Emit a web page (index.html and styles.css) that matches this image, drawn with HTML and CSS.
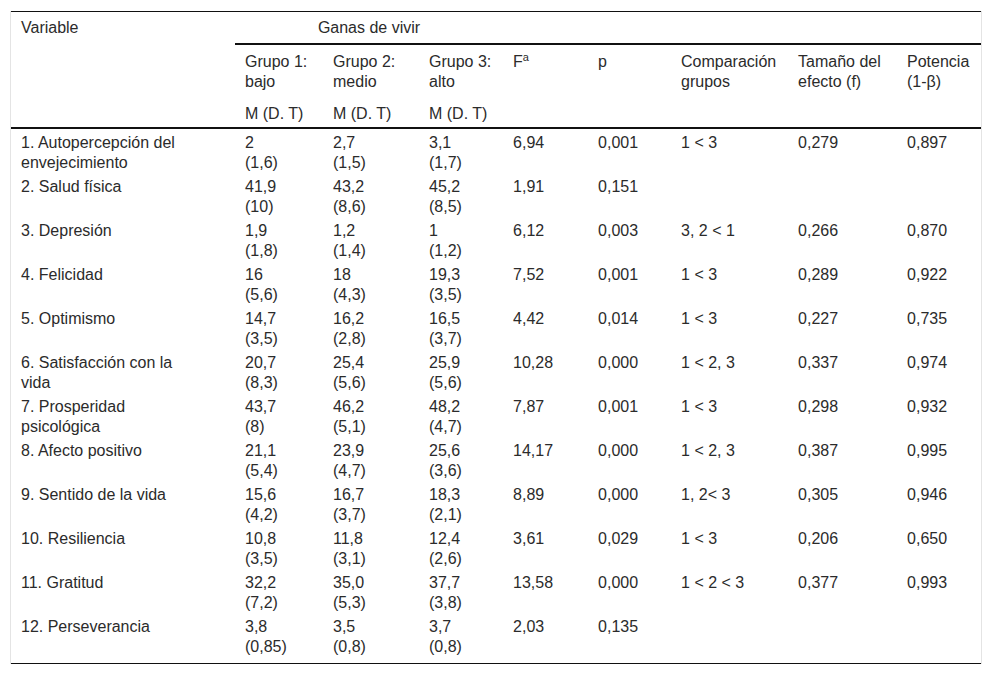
FILE: index.html
```html
<!DOCTYPE html>
<html lang="es">
<head>
<meta charset="utf-8">
<title>Ganas de vivir</title>
<link rel="stylesheet" href="styles.css">
</head>
<body>
<div class="wrap">
<table class="tbl">
<colgroup>
<col class="c1"><col class="c2"><col class="c3"><col class="c4"><col class="c5"><col class="c6"><col class="c7"><col class="c8"><col class="c9">
</colgroup>
<thead>
<tr>
<th rowspan="3" class="hb">Variable</th>
<th colspan="3" class="ganas">Ganas de vivir</th>
<th colspan="5" class="ganas-rest"></th>
</tr>
<tr>
<th class="r2">Grupo 1:<br>bajo</th>
<th class="r2">Grupo 2:<br>medio</th>
<th class="r2">Grupo 3:<br>alto</th>
<th rowspan="2" class="r2 hb">F<sup>a</sup></th>
<th rowspan="2" class="r2 hb">p</th>
<th rowspan="2" class="r2 hb">Comparación<br>grupos</th>
<th rowspan="2" class="r2 hb">Tamaño del<br>efecto (f)</th>
<th rowspan="2" class="r2 hb">Potencia<br>(1-β)</th>
</tr>
<tr>
<th class="r3 hb">M (D. T)</th>
<th class="r3 hb">M (D. T)</th>
<th class="r3 hb">M (D. T)</th>
</tr>
</thead>
<tbody>
<tr><td>1. Autopercepción del<br>envejecimiento</td><td>2<br>(1,6)</td><td>2,7<br>(1,5)</td><td>3,1<br>(1,7)</td><td>6,94</td><td>0,001</td><td>1 &lt; 3</td><td>0,279</td><td>0,897</td></tr>
<tr><td>2. Salud física</td><td>41,9<br>(10)</td><td>43,2<br>(8,6)</td><td>45,2<br>(8,5)</td><td>1,91</td><td>0,151</td><td></td><td></td><td></td></tr>
<tr><td>3. Depresión</td><td>1,9<br>(1,8)</td><td>1,2<br>(1,4)</td><td>1<br>(1,2)</td><td>6,12</td><td>0,003</td><td>3, 2 &lt; 1</td><td>0,266</td><td>0,870</td></tr>
<tr><td>4. Felicidad</td><td>16<br>(5,6)</td><td>18<br>(4,3)</td><td>19,3<br>(3,5)</td><td>7,52</td><td>0,001</td><td>1 &lt; 3</td><td>0,289</td><td>0,922</td></tr>
<tr><td>5. Optimismo</td><td>14,7<br>(3,5)</td><td>16,2<br>(2,8)</td><td>16,5<br>(3,7)</td><td>4,42</td><td>0,014</td><td>1 &lt; 3</td><td>0,227</td><td>0,735</td></tr>
<tr><td>6. Satisfacción con la<br>vida</td><td>20,7<br>(8,3)</td><td>25,4<br>(5,6)</td><td>25,9<br>(5,6)</td><td>10,28</td><td>0,000</td><td>1 &lt; 2, 3</td><td>0,337</td><td>0,974</td></tr>
<tr><td>7. Prosperidad<br>psicológica</td><td>43,7<br>(8)</td><td>46,2<br>(5,1)</td><td>48,2<br>(4,7)</td><td>7,87</td><td>0,001</td><td>1 &lt; 3</td><td>0,298</td><td>0,932</td></tr>
<tr><td>8. Afecto positivo</td><td>21,1<br>(5,4)</td><td>23,9<br>(4,7)</td><td>25,6<br>(3,6)</td><td>14,17</td><td>0,000</td><td>1 &lt; 2, 3</td><td>0,387</td><td>0,995</td></tr>
<tr><td>9. Sentido de la vida</td><td>15,6<br>(4,2)</td><td>16,7<br>(3,7)</td><td>18,3<br>(2,1)</td><td>8,89</td><td>0,000</td><td>1, 2&lt; 3</td><td>0,305</td><td>0,946</td></tr>
<tr><td>10. Resiliencia</td><td>10,8<br>(3,5)</td><td>11,8<br>(3,1)</td><td>12,4<br>(2,6)</td><td>3,61</td><td>0,029</td><td>1 &lt; 3</td><td>0,206</td><td>0,650</td></tr>
<tr><td>11. Gratitud</td><td>32,2<br>(7,2)</td><td>35,0<br>(5,3)</td><td>37,7<br>(3,8)</td><td>13,58</td><td>0,000</td><td>1 &lt; 2 &lt; 3</td><td>0,377</td><td>0,993</td></tr>
<tr class="last"><td>12. Perseverancia</td><td>3,8<br>(0,85)</td><td>3,5<br>(0,8)</td><td>3,7<br>(0,8)</td><td>2,03</td><td>0,135</td><td></td><td></td><td></td></tr>
</tbody>
</table>
</div>
</body>
</html>
```

FILE: styles.css
```css
html, body {
  margin: 0;
  padding: 0;
  background: #fff;
}

body {
  font-family: "Liberation Sans", Arial, sans-serif;
  font-size: 16px;
  line-height: 20px;
  color: #2b2b2b;
}

.wrap {
  margin: 11px 0 0 10px;
  width: 970px;
  border-left: 1px solid #e4e4e4;
  border-right: 1px solid #e4e4e4;
}

.tbl {
  width: 970px;
  table-layout: fixed;
  border-collapse: separate;
  border-spacing: 0;
  border-top: 1px solid #111;
  border-bottom: 1px solid #111;
}

.c1 { width: 224px; }
.c2 { width: 88px; }
.c3 { width: 96px; }
.c4 { width: 84px; }
.c5 { width: 85px; }
.c6 { width: 83px; }
.c7 { width: 117px; }
.c8 { width: 109px; }
.c9 { width: 84px; }

.tbl th {
  font-weight: normal;
  text-align: left;
  vertical-align: top;
  padding: 6px 10px 5px;
}

.tbl th.ganas {
  text-align: center;
  padding: 6px 0 5px;
  border-bottom: 2px solid #111;
}

.tbl th.ganas-rest {
  padding: 0;
  border-bottom: 2px solid #111;
}

.tbl th.r2 {
  padding-top: 7px;
  padding-bottom: 5px;
}

.tbl th.r3 {
  padding-top: 7px;
  padding-bottom: 3px;
}

.tbl th.hb {
  border-bottom: 2px solid #111;
}

.tbl sup {
  font-size: 11px;
  line-height: 0;
  vertical-align: 6px;
}

.tbl td {
  vertical-align: top;
  padding: 4px 10px 0;
}

.tbl tr.last td {
  padding-bottom: 6px;
}
```
